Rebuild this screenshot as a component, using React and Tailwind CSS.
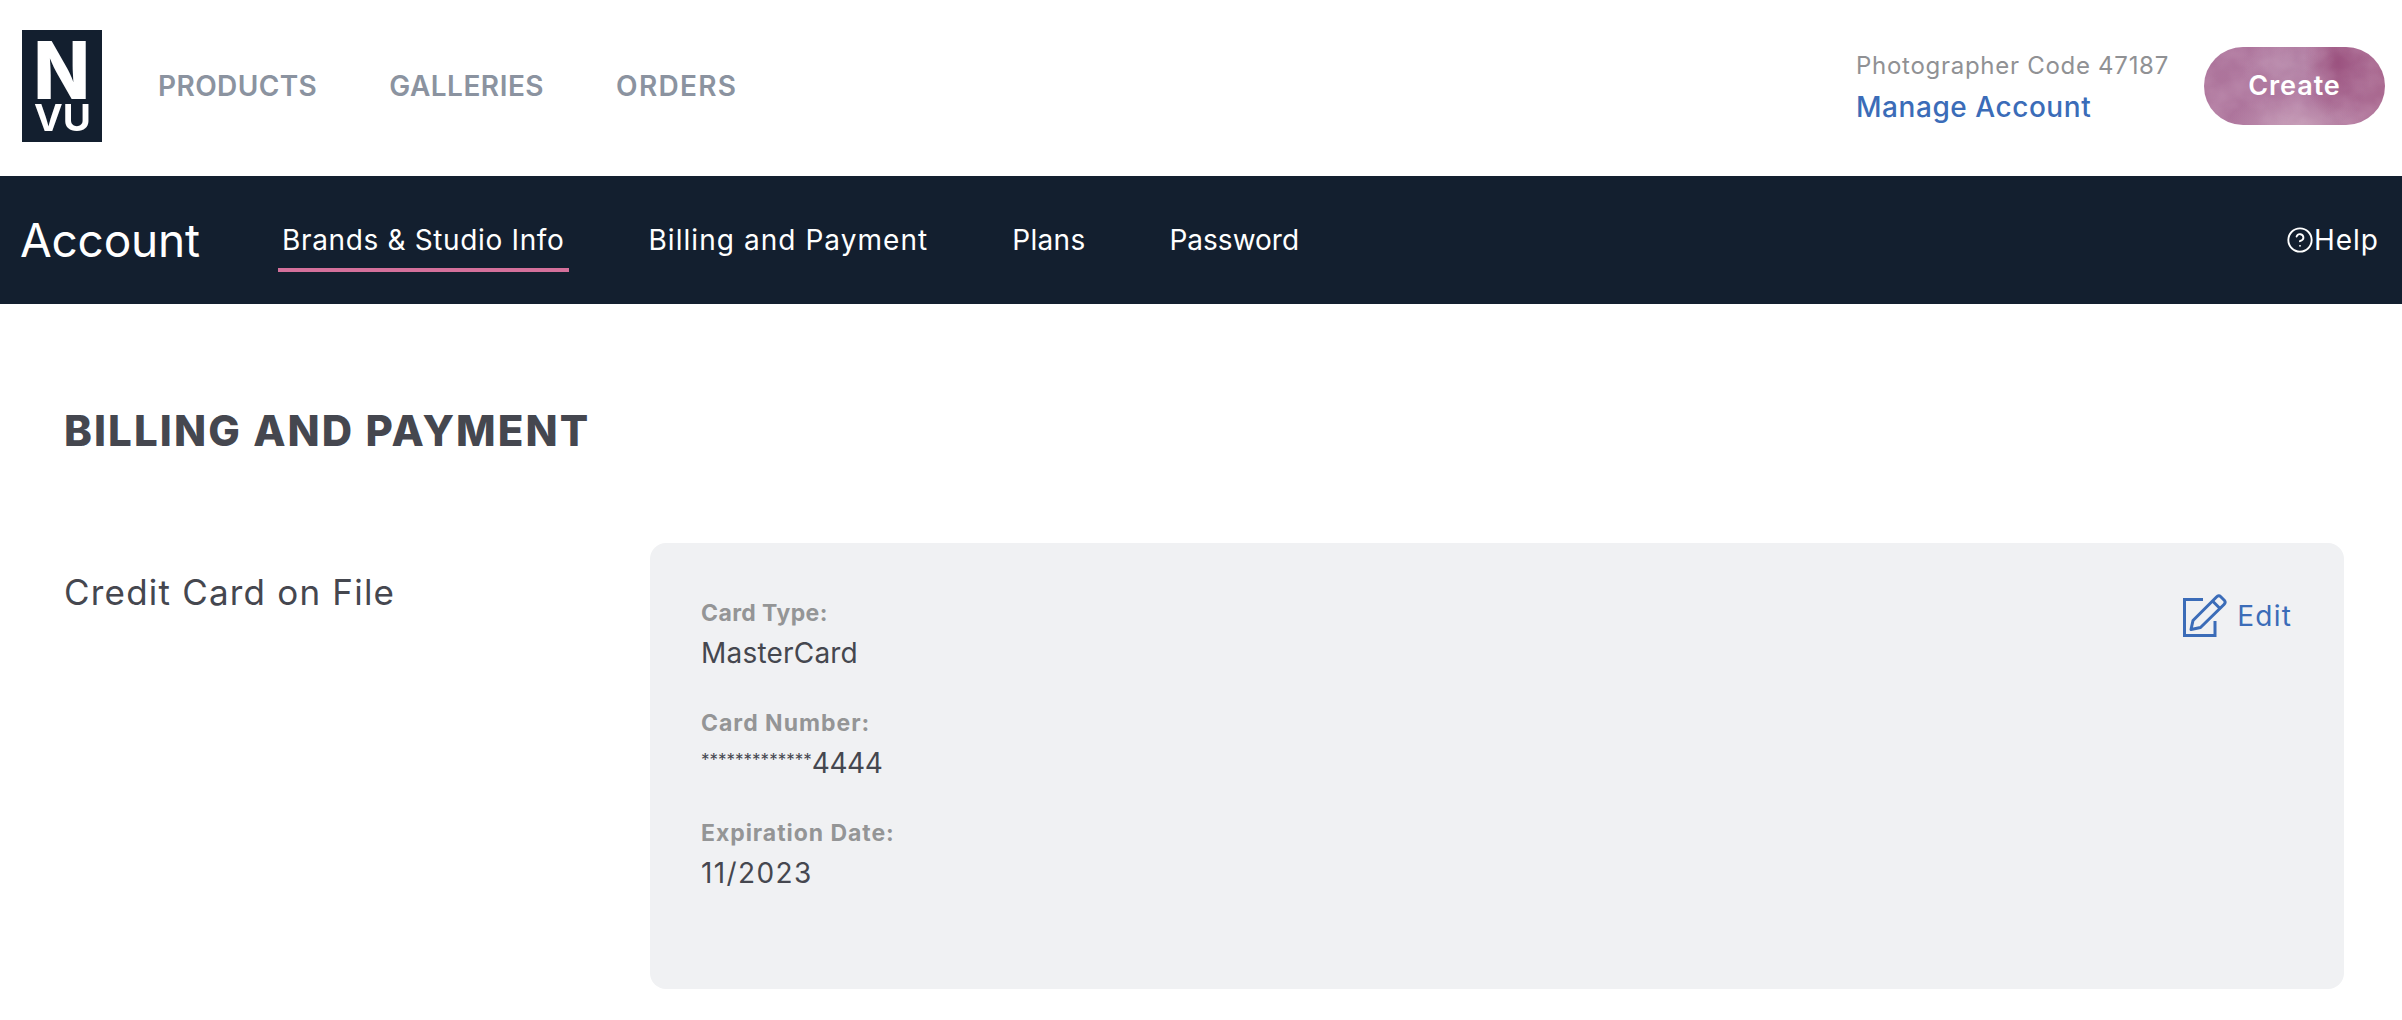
import React from "react";
import { CircleHelp } from "lucide-react";

function Logo() {
  return (
    <div className="w-[80px] h-[112px] bg-[#131f2f] flex flex-col items-center text-white font-['Inter',sans-serif] font-extrabold shrink-0">
      <div className="text-[80px] leading-[58px] h-[58px] mt-[11px] scale-x-[0.92]">N</div>
      <div className="text-[37px] leading-[27px] h-[27px] mt-[5px] scale-x-[1.04] font-bold">VU</div>
    </div>
  );
}

function EditIcon() {
  return (
    <svg width="44" height="44" viewBox="0 0 44 44" fill="none" stroke="#3b6cb8" strokeWidth="3" className="shrink-0">
      <path d="M20 5.5H1.5V41.5H32V27" />
      <path d="M8 35.5L10 26.5L33.5 3C35 1.5 36.5 1.5 37.5 2.5L41.5 6.5C42.5 7.5 42.5 9 41 10.5L17.5 33.5Z" strokeLinejoin="round" />
      <path d="M29.5 7L37.5 15" />
    </svg>
  );
}

function Field({ label, labelClass, valueClass, children }) {
  return (
    <div className="mb-[35px]">
      <div className={"text-[23px] leading-[30px] font-bold text-[#949596] " + labelClass}>{label}</div>
      <div className={"text-[28px] leading-[40px] mt-[5px] text-[#45474f] " + valueClass}>{children}</div>
    </div>
  );
}

function CreateButton() {
  return (
    <button className="relative overflow-hidden w-[181px] h-[78px] rounded-full text-white text-[27px] font-semibold tracking-[0.9px] bg-[#ab7199] bg-[radial-gradient(ellipse_34px_60px_at_74%_20%,#9b527f_0%,transparent_100%),radial-gradient(ellipse_70px_32px_at_52%_100%,#c49ab5_0%,transparent_100%),radial-gradient(ellipse_50px_34px_at_48%_24%,#b586a8_0%,transparent_100%),linear-gradient(90deg,#ad749b,#ae769e_55%,#a9688f)]">
      <svg className="absolute inset-0 w-full h-full opacity-20" width="181" height="78">
        <filter id="marble">
          <feTurbulence type="fractalNoise" baseFrequency="0.03 0.035" numOctaves="3" seed="7" />
          <feColorMatrix values="0 0 0 0 0.95  0 0 0 0 0.8  0 0 0 0 0.9  1.6 0 0 0 -0.55" />
        </filter>
        <rect width="181" height="78" filter="url(#marble)" />
      </svg>
      <span className="relative">Create</span>
    </button>
  );
}

export default function App() {
  return (
    <div className="w-[2402px] h-[1020px] overflow-hidden bg-white font-['Inter',sans-serif]">
      <header className="h-[176px] flex items-center pl-[22px] pr-[17px] pb-[4px]">
        <Logo />
        <nav className="flex gap-[72px] ml-[56px] text-[28px] font-semibold text-[#8b93a0]">
          <a className="tracking-[0.4px]">PRODUCTS</a>
          <a className="tracking-[0.5px]">GALLERIES</a>
          <a className="tracking-[1.3px]">ORDERS</a>
        </nav>
        <div className="ml-auto mr-[35px] flex flex-col pt-[2px]">
          <div className="text-[24px] leading-[30px] text-[#909194] tracking-[0.72px]">Photographer Code 47187</div>
          <a className="text-[28px] leading-[34px] mt-[9px] font-medium text-[#3b6cb8] tracking-[0.55px]">Manage Account</a>
        </div>
        <CreateButton />
      </header>

      <div className="h-[128px] bg-[#131f2f] flex items-center pl-[20px] pr-[23px] text-white">
        <div className="text-[46px] font-normal tracking-[-0.2px] w-[262px]">Account</div>
        <nav className="flex h-full text-[28px] font-normal gap-[84px] items-stretch">
          <a className="relative flex items-center tracking-[0.65px]">
            Brands &amp; Studio Info
            <span className="absolute left-[-4px] right-[-4px] bottom-[32px] h-[4px] bg-[#d4709b]" />
          </a>
          <a className="flex items-center tracking-[1.05px]">Billing and Payment</a>
          <a className="flex items-center tracking-[0.3px]">Plans</a>
          <a className="flex items-center">Password</a>
        </nav>
        <a className="ml-auto flex items-center text-[28px] tracking-[1px]">
          <CircleHelp size={28} strokeWidth={1.6} />
          Help
        </a>
      </div>

      <main className="pl-[64px] pr-[58px]">
        <h1 className="text-[42px] leading-[50px] font-extrabold text-[#45474f] pt-[102px] tracking-[2.1px]">BILLING AND PAYMENT</h1>
        <div className="flex mt-[87px]">
          <div className="w-[586px] shrink-0 text-[35px] leading-[44px] text-[#45474f] pt-[27px] tracking-[1.2px]">Credit Card on File</div>
          <section className="flex-1 h-[446px] rounded-[16px] bg-[#f0f1f3] pl-[51px] pr-[52px] pt-[55px] flex justify-between items-start">
            <div>
              <Field label="Card Type:" labelClass="tracking-[0.4px]" valueClass="tracking-[0.2px]">MasterCard</Field>
              <Field label="Card Number:" labelClass="tracking-[1px]" valueClass="tracking-[-0.4px]">
                <span className="relative -top-[7px] text-[17px] leading-none tracking-normal">*************</span>4444
              </Field>
              <Field label="Expiration Date:" labelClass="tracking-[0.95px]" valueClass="tracking-[1.4px]">11/2023</Field>
            </div>
            <a className="flex items-center gap-[10px] text-[#3b6cb8] text-[28px] tracking-[1.2px] -mt-[4px]">
              <EditIcon />
              Edit
            </a>
          </section>
        </div>
      </main>
    </div>
  );
}
